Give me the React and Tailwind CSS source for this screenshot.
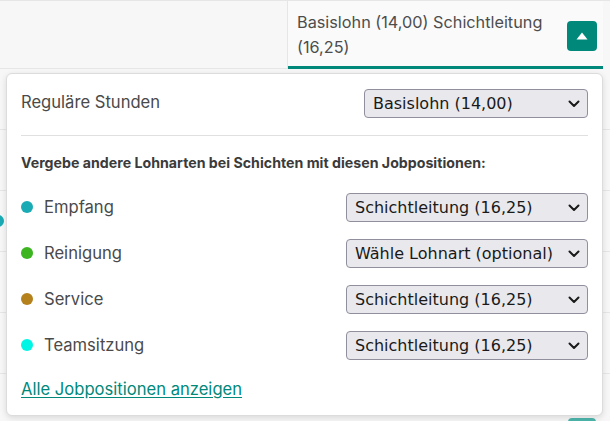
import React from 'react';

const rows = [
  { name: 'Empfang', color: 'bg-[#1aabb5]', value: 'Schichtleitung (16,25)' },
  { name: 'Reinigung', color: 'bg-[#3cb521]', value: 'Wähle Lohnart (optional)' },
  { name: 'Service', color: 'bg-[#b5811c]', value: 'Schichtleitung (16,25)' },
  { name: 'Teamsitzung', color: 'bg-[#00f5e4]', value: 'Schichtleitung (16,25)' },
];

function Chevron() {
  return (
    <svg width="12" height="8" viewBox="0 0 12 8" className="shrink-0">
      <path d="M1.5 1.5 L6 6 L10.5 1.5" fill="none" stroke="#1a1a1a" strokeWidth="2" strokeLinecap="round" strokeLinejoin="round" />
    </svg>
  );
}

function FakeSelect({ value, width }) {
  return (
    <div
      className={`flex h-[29px] ${width} items-center justify-between rounded-[4px] border border-[#8f8f9d] bg-[#e9e9ed] pl-[8px] pr-[7px] text-[16px] text-[#1a1a1a]`}
      style={{ fontFamily: '"DejaVu Sans", sans-serif' }}
    >
      <span className="whitespace-nowrap">{value}</span>
      <Chevron />
    </div>
  );
}

export default function App() {
  return (
    <div className="relative h-[421px] w-[610px] overflow-hidden bg-[#f7f7f7]" style={{ fontFamily: 'Inter, sans-serif' }}>
      {/* table behind */}
      <div className="flex h-[69px] border-t border-[#e6e6e6]">
        <div className="w-[288px] border-b border-r border-[#e6e6e6]" />
        <div className="flex w-[315px] items-start justify-between border-b-[3px] border-[#00897b] bg-[#fafafa] pl-[9px] pr-[6px] pt-[9px]">
          <div className="w-[262px] text-[16.25px] leading-[25px] text-[#4d4d4d]">Basislohn (14,00) Schichtleitung (16,25)</div>
          <div className="mt-[11px] flex h-[30px] w-[30px] items-center justify-center rounded-[4px] bg-[#00897b]">
            <svg width="12" height="8" viewBox="0 0 12 8">
              <path d="M6 0.5 L11.5 7.5 L0.5 7.5 Z" fill="white" />
            </svg>
          </div>
        </div>
      </div>
      {[0, 1, 2, 3, 4].map((i) => (
        <div key={i} className="relative h-[61px] border-b border-[#e6e6e6]">
          {i === 2 && <div className="absolute left-[-8px] top-[24px] h-[12px] w-[12px] rounded-full bg-[#1aabb5]" />}
        </div>
      ))}
      <div className="absolute left-[568px] top-[418px] h-[30px] w-[28px] rounded-[4px] bg-[#4db6ac]" />

      {/* popover */}
      <div className="absolute left-[6px] top-[73px] h-[343px] w-[597px] rounded-[6px] border border-[#dcdcdc] bg-white px-[14px] pt-[15px] shadow-[0_2px_6px_rgba(0,0,0,0.12)]">
        <div className="flex items-center justify-between">
          <span className="-mt-[3px] text-[16.6px] text-[#4a4a4a]">Reguläre Stunden</span>
          <FakeSelect value="Basislohn (14,00)" width="w-[224px]" />
        </div>
        <div className="mt-[17px] h-px bg-[#e0e0e0]" />
        <div className="mt-[17px] text-[14.2px] font-bold leading-[20px] text-[#3b3b3b]">
          Vergebe andere Lohnarten bei Schichten mit diesen Jobpositionen:
        </div>
        <div className="mt-[20px] flex flex-col gap-[17px]">
          {rows.map((r) => (
            <div key={r.name} className="flex items-center justify-between">
              <div className="flex items-center gap-[11px]">
                <span className={`h-[12px] w-[12px] rounded-full ${r.color}`} />
                <span className="text-[16.6px] text-[#4a4a4a]">{r.name}</span>
              </div>
              <FakeSelect value={r.value} width="w-[242px]" />
            </div>
          ))}
        </div>
        <a href="#" className="mt-[19px] block text-[16.6px] leading-[20px] text-[#00897b] underline underline-offset-2">
          Alle Jobpositionen anzeigen
        </a>
      </div>
    </div>
  );
}
